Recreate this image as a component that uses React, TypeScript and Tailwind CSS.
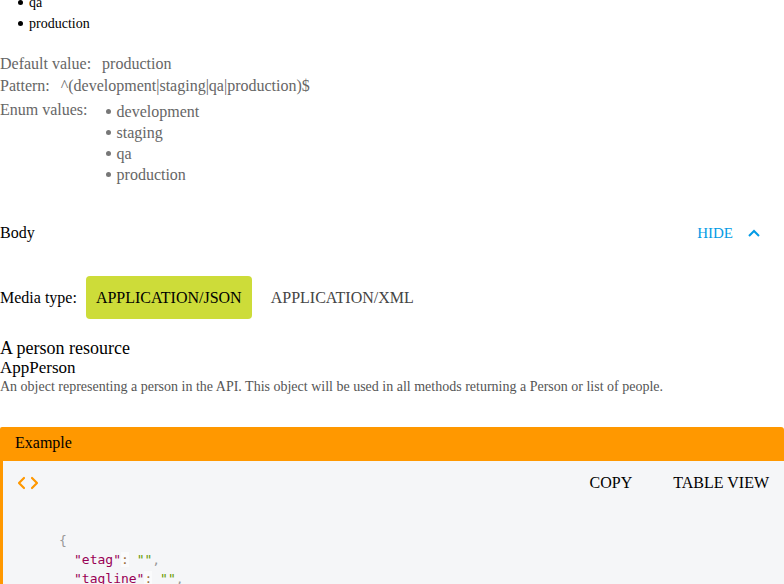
import React from "react";

const serif = { fontFamily: '"Liberation Serif", "Times New Roman", serif' };
const mono = { fontFamily: '"DejaVu Sans Mono", "Liberation Mono", monospace' };

function Bullet({ children, color }: { children: React.ReactNode; color: string }) {
  return (
    <li className="flex items-center h-[21px]">
      <span className={`w-[5px] h-[5px] rounded-full mr-[6px] ${color}`} />
      <span>{children}</span>
    </li>
  );
}

function CodeIcon() {
  return (
    <svg width="22" height="14" viewBox="0 0 22 14" fill="none" stroke="#ff9800" strokeWidth="2.2" strokeLinecap="round" strokeLinejoin="round">
      <polyline points="7,2 2,7 7,12" />
      <polyline points="15,2 20,7 15,12" />
    </svg>
  );
}

export default function App() {
  const envs = ["development", "staging", "qa", "production"];

  return (
    <div className="w-[784px] h-[584px] overflow-hidden bg-white text-black" style={serif}>
      {/* tail of previous enum list */}
      <ul className="mt-[-8px] pl-[18px] text-[14px] text-black">
        <Bullet color="bg-black">qa</Bullet>
        <Bullet color="bg-black">production</Bullet>
      </ul>

      <div className="mt-[19px] text-[16px] text-[#666]">
        <div className="flex h-[22px] items-center">
          <span className="mr-[11px]">Default value:</span>
          <span>production</span>
        </div>
        <div className="flex h-[22px] items-center">
          <span className="mr-[11px]">Pattern:</span>
          <span>^(development|staging|qa|production)$</span>
        </div>
        <div className="flex mt-[4px]">
          <span className="h-[21px] leading-[21px] mt-[-2px] mr-[18px]">Enum values:</span>
          <ul>
            {envs.map((e) => (
              <Bullet key={e} color="bg-[#777]">
                {e}
              </Bullet>
            ))}
          </ul>
        </div>
      </div>

      <div className="mt-[36px] flex items-center justify-between h-[24px] text-[16px]">
        <span>Body</span>
        <button className="flex items-center gap-[15px] pr-[24px] text-[15px] text-[#039be5]">
          <span>HIDE</span>
          <svg width="12" height="8" viewBox="0 0 12 8" fill="none" stroke="#039be5" strokeWidth="2">
            <polyline points="1,7 6,2 11,7" />
          </svg>
        </button>
      </div>

      <div className="mt-[31px] flex items-center text-[16px]">
        <span className="mr-[9px]">Media type:</span>
        <span className="h-[43px] px-[10px] flex items-center rounded-[4px] bg-[#cddc39]">APPLICATION/JSON</span>
        <span className="ml-[19px] text-[#444]">APPLICATION/XML</span>
      </div>

      <div className="mt-[19px]">
        <div className="text-[18px] leading-[20px]">A person resource</div>
        <div className="text-[17px] leading-[19px]">AppPerson</div>
        <div className="text-[14px] leading-[20px] text-[#555]">
          An object representing a person in the API. This object will be used in all methods returning a Person or list of people.
        </div>
      </div>

      <div className="mt-[30px] rounded-tr-[3px] rounded-tl-[2px] overflow-hidden">
        <div className="h-[34px] bg-[#ff9800] pl-[15px] text-[16px] leading-[32px]">Example</div>
        <div className="border-l-[3px] border-[#ff9800] bg-[#f5f6f8] h-[200px]">
          <div className="flex items-center justify-between h-[43px] pl-[14px] pr-[15px] text-[16px]">
            <CodeIcon />
            <div className="flex gap-[41px]">
              <span>COPY</span>
              <span>TABLE VIEW</span>
            </div>
          </div>
          <pre className="pt-[27px] pl-[56px] text-[13px] leading-[19px]" style={mono}>
            <div className="text-[#999]">{"{"}</div>
            <div className="pl-[15px]">
              <span className="text-[#905]">"etag"</span>
              <span className="text-[#9a6e3a] bg-white/50">:</span>{" "}
              <span className="text-[#690]">""</span>
              <span className="text-[#999]">,</span>
            </div>
            <div className="pl-[15px]">
              <span className="text-[#905]">"tagline"</span>
              <span className="text-[#9a6e3a] bg-white/50">:</span>{" "}
              <span className="text-[#690]">""</span>
              <span className="text-[#999]">,</span>
            </div>
          </pre>
        </div>
      </div>
    </div>
  );
}
